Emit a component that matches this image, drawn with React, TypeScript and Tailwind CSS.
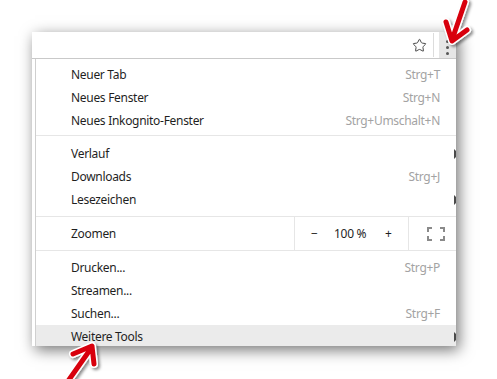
import { Star } from "lucide-react";

type Item = { label: string; shortcut?: string; sub?: boolean; active?: boolean };

const groupOne: Item[] = [
  { label: "Neuer Tab", shortcut: "Strg+T" },
  { label: "Neues Fenster", shortcut: "Strg+N" },
  { label: "Neues Inkognito-Fenster", shortcut: "Strg+Umschalt+N" },
];

const groupTwo: Item[] = [
  { label: "Verlauf", sub: true },
  { label: "Downloads", shortcut: "Strg+J" },
  { label: "Lesezeichen", sub: true },
];

const groupThree: Item[] = [
  { label: "Drucken...", shortcut: "Strg+P" },
  { label: "Streamen..." },
  { label: "Suchen...", shortcut: "Strg+F" },
  { label: "Weitere Tools", sub: true, active: true },
];

function MenuRow({ item }: { item: Item }) {
  return (
    <div
      className={`flex h-[23px] items-center pl-[35px] ${item.active ? "bg-[#ebebeb]" : ""}`}
    >
      <span className="flex-1 text-[#1f1f1f]">{item.label}</span>
      <span className="text-[#a3a3a3]">{item.shortcut}</span>
      <div className="flex w-[16px] shrink-0 pl-[14px]">
        {item.sub && (
          <div className="h-0 w-0 shrink-0 border-y-[5px] border-l-[5px] border-y-transparent border-l-[#4a4a4a]" />
        )}
      </div>
    </div>
  );
}

function FullscreenIcon() {
  return (
    <svg width="18" height="14" viewBox="0 0 18 14" fill="none" stroke="#8a8a8a" strokeWidth="2">
      <path d="M1 5V1h4M13 1h4v4M17 9v4h-4M5 13H1V9" />
    </svg>
  );
}

function Arrows() {
  const top = "M465 2 L452 40 M446 22 L452 41 L467 30";
  const bottom = "M66 384 L92 347 M73 354 L92 346 L94 364";
  return (
    <svg className="pointer-events-none absolute inset-0" width="497" height="379" viewBox="0 0 497 379">
      <defs>
        <filter id="sh" x="-20%" y="-20%" width="140%" height="140%">
          <feDropShadow dx="2" dy="2" stdDeviation="1.5" floodColor="#000" floodOpacity="0.45" />
        </filter>
      </defs>
      <g filter="url(#sh)" fill="none" strokeLinecap="round" strokeLinejoin="round">
        <path d={top} stroke="#fff" strokeWidth="8" />
        <path d={top} stroke="#d8000c" strokeWidth="5" />
        <path d={bottom} stroke="#fff" strokeWidth="8" />
        <path d={bottom} stroke="#d8000c" strokeWidth="5" />
      </g>
    </svg>
  );
}

export default function App() {
  return (
    <div
      className="relative h-[379px] w-[497px] overflow-hidden bg-white pl-[32px] pt-[32px] text-[12px] tracking-[-0.3px]"
      style={{ fontFamily: '"Segoe UI", "Noto Sans", sans-serif' }}
    >
      <div className="flex h-[314px] w-[424px] flex-col overflow-hidden bg-white shadow-[3px_4px_14px_rgba(0,0,0,0.55)]">
        <div className="flex h-[27px] shrink-0 items-stretch border-b border-[#c9c9c9]">
          <div className="flex-1" />
          <div className="flex w-[28px] items-center justify-center">
            <Star size={15} strokeWidth={1.6} color="#4a4a4a" />
          </div>
          <div className="my-[1px] w-px bg-[#dcdcdc]" />
          <div className="ml-[5px] flex w-[17px] flex-col items-center justify-center gap-[3px] bg-[#e6e6e6] pt-[4px]">
            <div className="h-[3px] w-[3px] rounded-full bg-[#555]" />
            <div className="h-[3px] w-[3px] rounded-full bg-[#555]" />
            <div className="h-[3px] w-[3px] rounded-full bg-[#555]" />
          </div>
        </div>

        <div className="flex flex-1">
          <div className="w-[4px] shrink-0 border-r border-[#cfcfcf]" />
          <div className="flex flex-1 flex-col">
            <div className="border-b border-[#e6e6e6] pb-[3px] pt-[4px]">
              {groupOne.map((it) => (
                <MenuRow key={it.label} item={it} />
              ))}
            </div>
            <div className="border-b border-[#e6e6e6] pb-[5px] pt-[6px]">
              {groupTwo.map((it) => (
                <MenuRow key={it.label} item={it} />
              ))}
            </div>
            <div className="flex h-[34px] items-stretch border-b border-[#e6e6e6]">
              <div className="flex flex-1 items-center pl-[35px] pt-[1px] text-[#1f1f1f]">Zoomen</div>
              <div className="flex w-[115px] items-center border-x border-[#e6e6e6] text-[#1f1f1f]">
                <span className="w-[39px] pl-[16px]">−</span>
                <span className="w-[51px]">100 %</span>
                <span>+</span>
              </div>
              <div className="flex w-[47px] items-center pl-[18px]">
                <FullscreenIcon />
              </div>
            </div>
            <div className="pt-[5px]">
              {groupThree.map((it) => (
                <MenuRow key={it.label} item={it} />
              ))}
            </div>
          </div>
        </div>
      </div>
      <Arrows />
    </div>
  );
}
